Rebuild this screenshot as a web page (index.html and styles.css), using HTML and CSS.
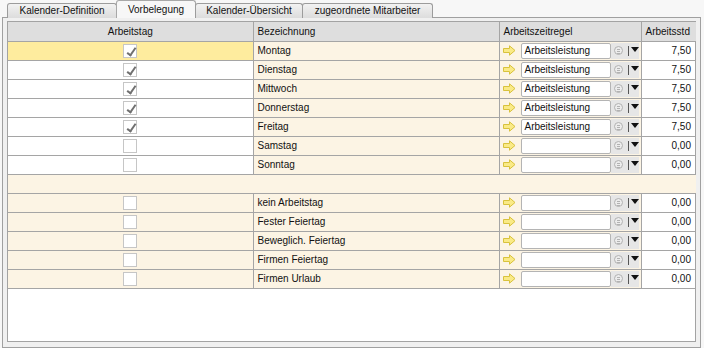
FILE: index.html
```html
<!DOCTYPE html>
<html lang="de">
<head>
    <meta charset="UTF-8">
    <title>Vorbelegung</title>
    <link rel="stylesheet" href="styles.css">
</head>
<body>

    <div class="tabs">
        <div class="tab tab-1">Kalender-Definition</div>
        <div class="tab tab-2 aktiv">Vorbelegung</div>
        <div class="tab tab-3">Kalender-Übersicht</div>
        <div class="tab tab-4">zugeordnete Mitarbeiter</div>
    </div>

    <div class="panel">
        <div class="grid">
            <table>
                <colgroup>
                    <col class="c-tag">
                    <col class="c-bez">
                    <col class="c-regel">
                    <col class="c-std">
                </colgroup>
                <tr class="kopf">
                    <th class="mitte">Arbeitstag</th>
                    <th>Bezeichnung</th>
                    <th>Arbeitszeitregel</th>
                    <th>Arbeitsstd</th>
                </tr>

                <!-- Wochentage -->
                <tr class="tag gewaehlt">
                    <td class="mitte"><span class="check an"></span></td>
                    <td class="creme">Montag</td>
                    <td class="creme"><div class="regel"><svg class="pfeil" width="13" height="11" viewBox="0 0 13 11"><path d="M0.5 3.5H6.5V0.8L12 5.5L6.5 10.2V7.5H0.5Z"/></svg><span class="feld">Arbeitsleistung</span><span class="knopf"><span class="kreis"></span><span class="strich"></span><span class="dreieck"></span></span></div></td>
                    <td class="zahl">7,50</td>
                </tr>
                <tr class="tag">
                    <td class="mitte"><span class="check an"></span></td>
                    <td class="creme">Dienstag</td>
                    <td class="creme"><div class="regel"><svg class="pfeil" width="13" height="11" viewBox="0 0 13 11"><path d="M0.5 3.5H6.5V0.8L12 5.5L6.5 10.2V7.5H0.5Z"/></svg><span class="feld">Arbeitsleistung</span><span class="knopf"><span class="kreis"></span><span class="strich"></span><span class="dreieck"></span></span></div></td>
                    <td class="zahl">7,50</td>
                </tr>
                <tr class="tag">
                    <td class="mitte"><span class="check an"></span></td>
                    <td class="creme">Mittwoch</td>
                    <td class="creme"><div class="regel"><svg class="pfeil" width="13" height="11" viewBox="0 0 13 11"><path d="M0.5 3.5H6.5V0.8L12 5.5L6.5 10.2V7.5H0.5Z"/></svg><span class="feld">Arbeitsleistung</span><span class="knopf"><span class="kreis"></span><span class="strich"></span><span class="dreieck"></span></span></div></td>
                    <td class="zahl">7,50</td>
                </tr>
                <tr class="tag">
                    <td class="mitte"><span class="check an"></span></td>
                    <td class="creme">Donnerstag</td>
                    <td class="creme"><div class="regel"><svg class="pfeil" width="13" height="11" viewBox="0 0 13 11"><path d="M0.5 3.5H6.5V0.8L12 5.5L6.5 10.2V7.5H0.5Z"/></svg><span class="feld">Arbeitsleistung</span><span class="knopf"><span class="kreis"></span><span class="strich"></span><span class="dreieck"></span></span></div></td>
                    <td class="zahl">7,50</td>
                </tr>
                <tr class="tag">
                    <td class="mitte"><span class="check an"></span></td>
                    <td class="creme">Freitag</td>
                    <td class="creme"><div class="regel"><svg class="pfeil" width="13" height="11" viewBox="0 0 13 11"><path d="M0.5 3.5H6.5V0.8L12 5.5L6.5 10.2V7.5H0.5Z"/></svg><span class="feld">Arbeitsleistung</span><span class="knopf"><span class="kreis"></span><span class="strich"></span><span class="dreieck"></span></span></div></td>
                    <td class="zahl">7,50</td>
                </tr>
                <tr class="tag">
                    <td class="mitte"><span class="check"></span></td>
                    <td class="creme">Samstag</td>
                    <td class="creme"><div class="regel"><svg class="pfeil" width="13" height="11" viewBox="0 0 13 11"><path d="M0.5 3.5H6.5V0.8L12 5.5L6.5 10.2V7.5H0.5Z"/></svg><span class="feld"></span><span class="knopf"><span class="kreis"></span><span class="strich"></span><span class="dreieck"></span></span></div></td>
                    <td class="zahl">0,00</td>
                </tr>
                <tr class="tag">
                    <td class="mitte"><span class="check"></span></td>
                    <td class="creme">Sonntag</td>
                    <td class="creme"><div class="regel"><svg class="pfeil" width="13" height="11" viewBox="0 0 13 11"><path d="M0.5 3.5H6.5V0.8L12 5.5L6.5 10.2V7.5H0.5Z"/></svg><span class="feld"></span><span class="knopf"><span class="kreis"></span><span class="strich"></span><span class="dreieck"></span></span></div></td>
                    <td class="zahl">0,00</td>
                </tr>

                <tr class="trenner"><td colspan="4"></td></tr>

                <!-- Sondertage -->
                <tr class="tag">
                    <td class="mitte creme"><span class="check"></span></td>
                    <td class="creme">kein Arbeitstag</td>
                    <td class="creme"><div class="regel"><svg class="pfeil" width="13" height="11" viewBox="0 0 13 11"><path d="M0.5 3.5H6.5V0.8L12 5.5L6.5 10.2V7.5H0.5Z"/></svg><span class="feld"></span><span class="knopf"><span class="kreis"></span><span class="strich"></span><span class="dreieck"></span></span></div></td>
                    <td class="zahl">0,00</td>
                </tr>
                <tr class="tag">
                    <td class="mitte creme"><span class="check"></span></td>
                    <td class="creme">Fester Feiertag</td>
                    <td class="creme"><div class="regel"><svg class="pfeil" width="13" height="11" viewBox="0 0 13 11"><path d="M0.5 3.5H6.5V0.8L12 5.5L6.5 10.2V7.5H0.5Z"/></svg><span class="feld"></span><span class="knopf"><span class="kreis"></span><span class="strich"></span><span class="dreieck"></span></span></div></td>
                    <td class="zahl">0,00</td>
                </tr>
                <tr class="tag">
                    <td class="mitte creme"><span class="check"></span></td>
                    <td class="creme">Beweglich. Feiertag</td>
                    <td class="creme"><div class="regel"><svg class="pfeil" width="13" height="11" viewBox="0 0 13 11"><path d="M0.5 3.5H6.5V0.8L12 5.5L6.5 10.2V7.5H0.5Z"/></svg><span class="feld"></span><span class="knopf"><span class="kreis"></span><span class="strich"></span><span class="dreieck"></span></span></div></td>
                    <td class="zahl">0,00</td>
                </tr>
                <tr class="tag">
                    <td class="mitte creme"><span class="check"></span></td>
                    <td class="creme">Firmen Feiertag</td>
                    <td class="creme"><div class="regel"><svg class="pfeil" width="13" height="11" viewBox="0 0 13 11"><path d="M0.5 3.5H6.5V0.8L12 5.5L6.5 10.2V7.5H0.5Z"/></svg><span class="feld"></span><span class="knopf"><span class="kreis"></span><span class="strich"></span><span class="dreieck"></span></span></div></td>
                    <td class="zahl">0,00</td>
                </tr>
                <tr class="tag">
                    <td class="mitte creme"><span class="check"></span></td>
                    <td class="creme">Firmen Urlaub</td>
                    <td class="creme"><div class="regel"><svg class="pfeil" width="13" height="11" viewBox="0 0 13 11"><path d="M0.5 3.5H6.5V0.8L12 5.5L6.5 10.2V7.5H0.5Z"/></svg><span class="feld"></span><span class="knopf"><span class="kreis"></span><span class="strich"></span><span class="dreieck"></span></span></div></td>
                    <td class="zahl">0,00</td>
                </tr>
            </table>
        </div>
    </div>

</body>
</html>
```

FILE: styles.css
```css
* {
    margin: 0;
    padding: 0;
    box-sizing: border-box;
}

body {
    font-family: 'Liberation Sans', Arial, sans-serif;
    font-size: 10px;
    color: #111;
    background: #f7f7f7;
    width: 704px;
    height: 348px;
    overflow: hidden;
}

/* Reiter */

.tabs {
    display: flex;
    align-items: flex-end;
    height: 18px;
    padding-left: 7px;
    position: relative;
    z-index: 1;
}

.tab {
    height: 15px;
    line-height: 13px;
    text-align: center;
    background: linear-gradient(#f2f2f2, #dcdcdc);
    border: 1px solid #9c9c9c;
    border-bottom: none;
    border-radius: 3px 3px 0 0;
    margin-right: -1px;
}

.tab.aktiv {
    height: 18px;
    line-height: 17px;
    background: #f7f7f7;
    border-color: #a8a8a8;
}

.tab-1 { width: 110px; }
.tab-2 { width: 80px; }
.tab-3 { width: 108px; }
.tab-4 { width: 131px; }

.panel {
    margin: -1px 3px 0 2px;
    height: 331px;
    border: 1px solid #a0a0a0;
    background: #f0f0f0;
    padding: 3px 4px 5px 4px;
}

.grid {
    height: 100%;
    border: 1px solid #a3a3a3;
    background: #fff;
}

/* Tabelle */

table {
    width: 688px;
    border-collapse: collapse;
    table-layout: fixed;
}

.c-tag { width: 245px; }
.c-bez { width: 246px; }
.c-regel { width: 142px; }
.c-std { width: 55px; }

th, td {
    height: 19px;
    border-right: 1px solid #a5a5a5;
    border-bottom: 1px solid #a5a5a5;
    padding: 0 4px;
    text-align: left;
    font-weight: normal;
    white-space: nowrap;
    vertical-align: middle;
}

th:last-child, td:last-child {
    border-right: none;
}

.kopf th {
    background: #dedede;
    height: 19px;
}

.mitte {
    text-align: center;
}

.creme {
    background: #fcf4e4;
}

.gewaehlt td:first-child {
    background: #feec9e;
}

.zahl {
    text-align: right;
    padding-right: 5px;
}

.trenner td {
    background: #fcf4e4;
}

/* Checkbox */

.check {
    display: inline-block;
    width: 14px;
    height: 14px;
    border: 1px solid #c6c6c6;
    background: #fff;
    vertical-align: middle;
    position: relative;
}

.check.an::after {
    content: "";
    position: absolute;
    left: 5px;
    top: 1px;
    width: 3px;
    height: 8px;
    border-right: 2px solid #707070;
    border-bottom: 2px solid #707070;
    transform: rotate(35deg);
}

/* Arbeitszeitregel-Auswahl */

.regel {
    display: flex;
    align-items: center;
    margin-left: -1px;
    margin-right: -2px;
}

.pfeil {
    margin-right: 5px;
    flex: none;
}

.pfeil path {
    fill: #faea86;
    stroke: #d8c23c;
    stroke-width: 1;
}

.feld {
    width: 94px;
    height: 16px;
    line-height: 14px;
    padding-left: 3px;
    border: 1px solid #b4b4b4;
    border-radius: 2px;
    background: #fff;
}

.knopf {
    display: flex;
    align-items: center;
    height: 16px;
    width: 28px;
    background: #e6e6e6;
    padding-left: 3px;
}

.kreis {
    width: 9px;
    height: 9px;
    border: 1px solid #b2b2b2;
    border-radius: 50%;
    background: linear-gradient(#b2b2b2, #b2b2b2) center 2px / 3px 1px no-repeat,
                linear-gradient(#b2b2b2, #b2b2b2) center 4px / 3px 1px no-repeat,
                linear-gradient(#b2b2b2, #b2b2b2) center 6px / 3px 1px no-repeat,
                #ececec;
}

.strich {
    width: 1px;
    height: 10px;
    background: #555;
    margin-left: 5px;
}

.dreieck {
    margin-left: 2px;
    width: 0;
    height: 0;
    border-left: 4px solid transparent;
    border-right: 4px solid transparent;
    border-top: 5px solid #111;
    margin-top: -3px;
}
```
